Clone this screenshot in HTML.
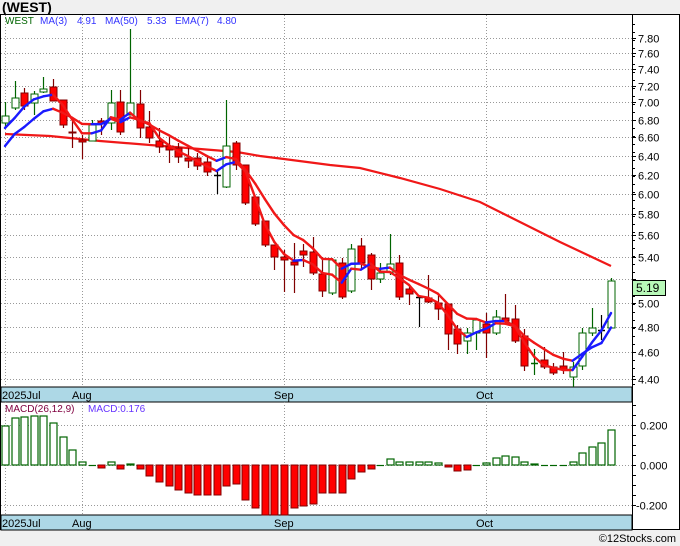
<!DOCTYPE html>
<html><head><meta charset="utf-8"><style>
html,body{margin:0;padding:0;background:#f0f0f0;width:680px;height:546px;overflow:hidden;font-family:"Liberation Sans",sans-serif}
svg{position:absolute;left:0;top:0}
</style></head><body>
<svg id="s" width="680" height="546" xmlns="http://www.w3.org/2000/svg" font-family="Liberation Sans, sans-serif">
<rect x="0" y="0" width="680" height="546" fill="#f0f0f0"/>
<text x="2" y="12" font-size="14" font-weight="bold" fill="#000">(WEST)</text>
<rect x="0.5" y="14.5" width="679" height="515" fill="#fff" stroke="#000"/>
<rect x="1" y="387" width="631" height="15" fill="#add8e6" stroke="#000" stroke-width="1"/>
<rect x="1" y="515" width="631" height="15" fill="#add8e6" stroke="#000" stroke-width="1"/>
<g font-size="11" fill="#000">
<text x="2" y="399">2025Jul</text><text x="72" y="399">Aug</text><text x="274" y="399">Sep</text><text x="476" y="399">Oct</text>
<text x="2" y="527">2025Jul</text><text x="72" y="527">Aug</text><text x="274" y="527">Sep</text><text x="476" y="527">Oct</text>
</g>
<line x1="632.5" y1="14" x2="632.5" y2="530" stroke="#000"/>
<g id="grid"></g>
<g id="plot"></g>
<g font-size="10">
<text x="5" y="24" fill="#006400">WEST</text>
<text x="40" y="24" fill="#3333ff">MA(3)</text><text x="77" y="24" fill="#3333ff">4.91</text>
<text x="105" y="24" fill="#3333ff">MA(50)</text><text x="147" y="24" fill="#3333ff">5.33</text>
<text x="175" y="24" fill="#3333ff">EMA(7)</text><text x="217" y="24" fill="#3333ff">4.80</text>
<text x="5" y="412" fill="#800040">MACD(26,12,9)</text>
<text x="88" y="412" fill="#6633ff">MACD:0.176</text>
</g>
<rect x="632.5" y="280.5" width="33" height="15" fill="#b8f8b8" stroke="#000"/>
<text x="636" y="292" font-size="12" fill="#000">5.19</text>
<text x="676" y="542" font-size="11" fill="#000" text-anchor="end">©12Stocks.com</text>
</svg>
<script>
var NS="http://www.w3.org/2000/svg";
function el(p,t,a){var e=document.createElementNS(NS,t);for(var k in a)e.setAttribute(k,a[k]);p.appendChild(e);return e;}
var G=document.getElementById('grid'),P=document.getElementById('plot');
function py(p){return 38+595.5*(Math.log(7.8)-Math.log(p));}
var labs=["7.80","7.60","7.40","7.20","7.00","6.80","6.60","6.40","6.20","6.00","5.80","5.60","5.40","5.20","5.00","4.80","4.60","4.40"];
labs.forEach(function(l){var y=Math.round(py(parseFloat(l)))+0.5;
 el(G,'line',{x1:1,y1:y,x2:632,y2:y,stroke:'#999','stroke-dasharray':'1,2'});
 el(G,'line',{x1:632,y1:y,x2:636,y2:y,stroke:'#000'});
 if(l!="5.20"){var t=el(G,'text',{x:638,y:y+4,'font-size':11,fill:'#000'});t.textContent=l;}});
for(var y=24;y<387;y+=8){el(G,'line',{x1:632,y1:y+.5,x2:635,y2:y+.5,stroke:'#000'});}
[[425,"0.200"],[465,"0.000"],[505,"-0.200"]].forEach(function(a){var y=a[0]+.5;
 el(G,'line',{x1:1,y1:y,x2:632,y2:y,stroke:'#999','stroke-dasharray':'1,2'});
 var t=el(G,'text',{x:a[1][0]=='-'?636:640,y:y+4,'font-size':11,fill:'#000'});t.textContent=a[1];});
for(var y=405;y<515;y+=10){el(G,'line',{x1:632,y1:y+.5,x2:636,y2:y+.5,stroke:'#000'});}
[5,82,284,486].forEach(function(x){
 el(G,'line',{x1:x+.5,y1:15,x2:x+.5,y2:387,stroke:'#999','stroke-dasharray':'1,2'});
 el(G,'line',{x1:x+.5,y1:402,x2:x+.5,y2:515,stroke:'#999','stroke-dasharray':'1,2'});});
var C=[[116,123,102,128,'g'],[98,108,81,110,'g'],[93,106,88,110,'r'],[94,103,91,115,'g'],[89,92,77,93,'g'],[87,101,79,101,'r'],[100,125,100,128,'r'],[132,133,119,148,'r'],[140,142,135,159,'r'],[125,141,120,141,'g'],[121,124,118,135,'r'],[103,123,90,130,'g'],[102,132,90,135,'r'],[103,115,29,115,'g'],[104,128,90,138,'r'],[127,138,111,143,'r'],[141,147,128,153,'r'],[146,150,137,163,'r'],[148,157,143,163,'r'],[158,161,148,168,'r'],[158,166,153,170,'r'],[162,172,157,176,'r'],[175,175,170,194,'k'],[146,187,100,188,'g'],[143,165,141,170,'r'],[165,203,165,205,'r'],[197,224,197,226,'r'],[221,245,221,247,'r'],[245,257,245,270,'r'],[257,260,250,292,'r'],[262,265,243,293,'r'],[251,255,244,267,'r'],[252,273,237,275,'r'],
[274,291,257,297,'r'],[260,293,258,295,'g'],[263,297,258,299,'r'],[249,291,244,293,'g'],[246,263,238,270,'r'],[255,279,253,290,'r'],[273,279,263,283,'g'],[264,272,234,275,'g'],[263,297,255,300,'r'],[289,294,285,305,'r'],[297,297,297,327,'k'],[298,302,275,303,'r'],[303,309,295,320,'r'],[304,334,304,350,'r'],[329,344,325,354,'r'],[333,341,328,354,'g'],[320,333,318,350,'g'],[324,333,313,358,'r'],[317,333,310,335,'g'],[318,321,294,323,'r'],[319,341,305,343,'r'],[336,366,329,371,'r'],[363,363,349,375,'g'],[360,367,347,369,'r'],[367,373,363,375,'r'],[366,370,352,374,'r'],[367,377,362,387,'g'],[333,366,328,370,'g'],[328,333,308,336,'g'],[330,330,315,340,'k'],[281,328,278,328,'g']];
function X(i){return 5+9.62*i;}
var m50=[[5,134],[50,136],[100,141],[150,145],[200,149],[237,152],[260,156],[284,159],[330,165],[360,168],[400,178],[440,189],[480,202],[520,222],[560,242],[611,266]];
el(P,'polyline',{points:m50.map(function(p){return p.join(',')}).join(' '),fill:'none',stroke:'#f01818','stroke-width':2.2});
var cl=C.map(function(c){return c[4]=='g'?c[0]:c[1];});
C.forEach(function(c,i){var x=Math.round(X(i))+.5;var col=c[4]=='g'?'#006400':(c[4]=='k'?'#000':'#800000');
 el(P,'line',{x1:x,y1:c[2],x2:x,y2:c[3],stroke:col,'stroke-width':1.2});
 if(c[1]-c[0]<1){el(P,'line',{x1:x-3.5,y1:c[0]+.5,x2:x+3.5,y2:c[0]+.5,stroke:col,'stroke-width':1.5});}
 else el(P,'rect',{x:x-3.5,y:c[0],width:7,height:c[1]-c[0],fill:c[4]=='g'?'#fff':'#f00',stroke:col,'stroke-width':1});});
function drawLine(v,s){for(var i=s+1;i<v.length;i++){el(P,'line',{x1:X(i-1),y1:v[i-1],x2:X(i),y2:v[i],stroke:v[i]<v[i-1]?'#1a1aff':'#f01818','stroke-width':2.4,'stroke-linecap':'round'});}}
var ema=[],e=146;cl.forEach(function(c,i){e=i==0?146:e+(c-e)*0.25;ema.push(e);});
drawLine(ema,0);
var ma=[];cl.forEach(function(c,i){ma.push(i==0?128:(i==1?118:(cl[i]+cl[i-1]+cl[i-2])/3));});
drawLine(ma,0);
var M=[426,418,417,416,416,423,437,450,462,465,468,462,469,464,469,476,482,486,490,493,495,495,495,486,484,500,508,515,515,515,508,506,504,493,493,493,479,472,469,465,459,462,462,462,462,463,467,471,470,465,463,458,456,457,462,464,465,465,465,462,453,447,443,430];
M.forEach(function(v,i){var x=Math.round(X(i))+.5;
 if(Math.abs(v-465)<1){el(P,'line',{x1:x-3.5,y1:465.5,x2:x+3.5,y2:465.5,stroke:'#006400','stroke-width':1.2});return;}
 if(v<465)el(P,'rect',{x:x-3.5,y:v,width:7,height:465-v,fill:'#fff',stroke:'#006400','stroke-width':1.2});
 else el(P,'rect',{x:x-3.5,y:465,width:7,height:v-465,fill:'#f00',stroke:'#800000','stroke-width':1});});
</script>
</body></html>
